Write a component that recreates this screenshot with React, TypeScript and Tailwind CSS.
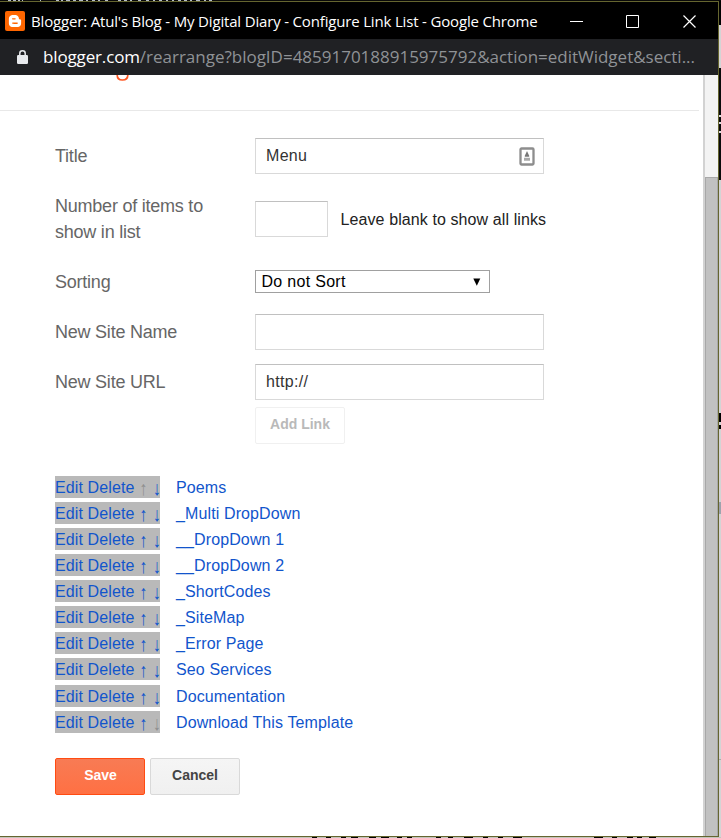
import { FaBloggerB } from "react-icons/fa";
import type { ReactNode } from "react";

const LINKS = [
  "Poems",
  "_Multi DropDown",
  "__DropDown 1",
  "__DropDown 2",
  "_ShortCodes",
  "_SiteMap",
  "_Error Page",
  "Seo Services",
  "Documentation",
  "Download This Template",
];

// [start, width] of the heading tops that peek out under the window
const HEADING_TOPS = [
  [312, 5], [326, 5], [341, 5], [351, 7], [369, 7], [381, 8], [397, 5], [407, 5], [436, 5], [448, 5],
  [464, 9], [483, 5], [498, 5], [513, 9], [594, 9], [612, 5], [627, 6], [637, 5], [649, 7],
];

// [start, width] of the page text that peeks out above the window
const TEXT_BOTTOMS = [
  [8, 3], [13, 3], [18, 2], [22, 1], [40, 1], [56, 3], [61, 2], [66, 4], [73, 3], [79, 4], [86, 2],
  [92, 3], [98, 2], [105, 3], [118, 3], [124, 3], [130, 2], [138, 3], [146, 3], [153, 2], [159, 3],
  [166, 2], [172, 2], [178, 3], [184, 3], [190, 2], [196, 4], [204, 2], [209, 3],
];

function TitleBar() {
  return (
    <div className="flex h-[37px] shrink-0 items-center bg-black pl-[5px] text-white">
      <span className="flex size-5 shrink-0 items-center justify-center rounded-[2px] bg-[#ff6600]">
        <FaBloggerB className="size-[14px]" />
      </span>
      <span className="ml-[6px] w-[520px] shrink-0 whitespace-nowrap font-['Open_Sans','Noto_Sans',sans-serif] text-[15px] leading-5 tracking-[-0.17px]">
        Blogger: Atul&#39;s Blog - My Digital Diary - Configure Link List - Google Chrome
      </span>
      <svg className="ml-[19px] shrink-0" width="128" height="14" viewBox="0 0 128 14" fill="none" stroke="white">
        <path d="M0 7.5h13" />
        <path d="M56.5 1.5h12v12h-12z" />
        <path d="M113.5 1.5l12 12M125.5 1.5l-12 12" strokeWidth="1.2" />
      </svg>
    </div>
  );
}

function AddressBar() {
  return (
    <div className="flex h-9 shrink-0 items-center bg-[#202124] pl-[17px]">
      <svg className="shrink-0" width="11" height="14" viewBox="0 0 11 14" fill="none">
        <rect x="0" y="5" width="11" height="9" rx="1.2" fill="#e8eaed" />
        <path d="M2.8 5.5V3.3a2.7 2.5 0 0 1 5.4 0v2.2" stroke="#e8eaed" strokeWidth="1.5" />
      </svg>
      <span className="ml-[15px] whitespace-nowrap font-['Open_Sans','Noto_Sans',sans-serif] text-[17px] leading-6 tracking-[-0.01px] text-[#8f9296]">
        <span className="tracking-[-0.15px] text-white">blogger.com</span>
        /rearrange?blogID=4859170188915975792&amp;action=editWidget&amp;secti...
      </span>
    </div>
  );
}

function Row({ label, className, children }: { label: string; className: string; children: ReactNode }) {
  return (
    <div className={`flex items-center ${className}`}>
      <div className="w-[200px] shrink-0 pr-10 text-[18px] leading-[26px] tracking-[-0.23px] text-[#666]">{label}</div>
      {children}
    </div>
  );
}

function Field({ className, children }: { className: string; children?: ReactNode }) {
  return (
    <div
      className={`flex h-9 shrink-0 items-center border border-[#d9d9d9] border-t-[#c0c0c0] bg-white pl-[10px] text-[16px] tracking-[0.3px] text-[#333] ${className}`}
    >
      {children}
    </div>
  );
}

function ContactIcon() {
  return (
    <svg className="ml-auto mr-[8px]" width="16" height="19" viewBox="0 0 16 19" fill="none">
      <rect x="1.5" y="1.5" width="13" height="16" rx="1" stroke="#8d8d8d" strokeWidth="2.3" />
      <path d="M8 4l2.2 4.8v1H5.8v-1z" fill="#777" />
      <path d="M5 11.5h6M5 13h6" stroke="#aaa" strokeWidth="1.3" />
    </svg>
  );
}

function Arrow({ children, disabled }: { children: string; disabled: boolean }) {
  return (
    <span className={`inline-block w-[9px] translate-y-px scale-y-125 ${disabled ? "text-[#8f8f8f]" : ""}`}>
      {children}
    </span>
  );
}

function Form() {
  return (
    <div className="flex flex-col pl-[55px] pt-[27px]">
      <Row label="Title" className="h-9">
        <Field className="w-[289px]">
          Menu
          <ContactIcon />
        </Field>
      </Row>
      <Row label="Number of items to show in list" className="mt-[19px] h-[52px]">
        <Field className="w-[73px]" />
        <span className="ml-[12.5px] whitespace-nowrap pt-[2px] text-[16px] tracking-[0.1px] text-[#222]">
          Leave blank to show all links
        </span>
      </Row>
      <Row label="Sorting" className="mt-[25px] h-[23px]">
        <div className="flex h-[23px] w-[235px] items-center justify-between border border-[#a0a0a0] pl-[5.5px] pr-[8px] text-[16px] tracking-[0.3px] text-black">
          Do not Sort
          <svg width="8" height="8" viewBox="0 0 8 8">
            <path d="M0.3 0.5h7L3.8 7.8z" fill="black" />
          </svg>
        </div>
      </Row>
      <Row label="New Site Name" className="mt-[21px] h-9">
        <Field className="w-[289px]" />
      </Row>
      <Row label="New Site URL" className="mt-[14px] h-9">
        <Field className="w-[289px]">http://</Field>
      </Row>
      <div className="ml-[200px] mt-[7px] flex h-[37px] w-[90px] items-center justify-center rounded-[2px] border border-[#f0f0f0] pb-[2px] text-[14px] font-bold text-[#b9b9b9]">
        Add Link
      </div>
      <div className="mt-[32px] flex flex-col gap-[4.065px] whitespace-nowrap text-[16px] leading-[24px] tracking-[0.12px] text-[#1155cc]">
        {LINKS.map((name, i) => (
          <div key={name} className="flex h-[22px]">
            <div className="w-[105px] shrink-0 bg-[#b9b9b9]">
              Edit Delete <Arrow disabled={i === 0}>↑</Arrow>{" "}
              <Arrow disabled={i === LINKS.length - 1}>↓</Arrow>
            </div>
            <span className="ml-[16px]">{name}</span>
          </div>
        ))}
      </div>
      <div className="mt-[25.4px] flex gap-[5px] text-[14px] font-bold">
        <div className="flex h-[37px] w-[90px] items-center justify-center rounded-[2px] border border-[#ff4b12] bg-linear-to-b from-[#f87b54] to-[#ff7043] pb-[2px] pl-px text-white">
          Save
        </div>
        <div className="flex h-[37px] w-[90px] items-center justify-center rounded-[2px] border border-[#d9d9d9] bg-linear-to-b from-[#f5f5f5] to-[#f0f0f0] pb-[2px] text-[#444]">
          Cancel
        </div>
      </div>
    </div>
  );
}

function PageBehind() {
  return (
    <svg className="shrink-0" width="2" height="836" viewBox="0 0 2 836" shapeRendering="crispEdges">
      <rect width="2" height="836" fill="#d4d4d4" />
      <rect width="2" height="24" fill="#000" />
      <rect y="67" width="2" height="112" fill="#0a0a0a" />
      <path d="M0 114.5h2M0 121.5h2M0 130.5h2" stroke="#ddd" strokeWidth="2" />
      <rect y="412" width="2" height="9" fill="#000" />
      <rect y="424" width="2" height="4" fill="#000" />
      <rect y="501" width="2" height="12" fill="#9da3ad" />
      <rect y="758" width="2" height="1" fill="#aaa" />
    </svg>
  );
}

export default function App() {
  return (
    <div className="flex h-[838px] w-[721px] flex-col overflow-hidden bg-white font-['Liberation_Sans',Arial,sans-serif]">
      <svg className="shrink-0" width="721" height="1" viewBox="0 0 721 1" shapeRendering="crispEdges">
        <rect width="721" height="1" fill="#080808" />
        {TEXT_BOTTOMS.map(([x, w]) => (
          <rect key={x} x={x} width={w} height="1" fill="#b5bdc8" />
        ))}
      </svg>
      <div className="flex h-[836px] shrink-0">
        <div className="flex w-[719px] shrink-0 flex-col border-y border-r border-[#65652f]">
          <TitleBar />
          <AddressBar />
          <div className="flex min-h-0 flex-1">
            <div className="w-[703px] shrink-0">
              <div className="mr-[4px] h-9 border-b border-[#e8e8e8] pl-[115px]">
                <svg width="15" height="7" viewBox="0 0 15 7" fill="none" className="block">
                  <path d="M2.2 0c0 3.6 2 5 5.2 5s5.4-1.6 5.4-5" stroke="#ff5722" strokeWidth="1.7" />
                </svg>
              </div>
              <Form />
            </div>
            <div className="w-[15px] shrink-0 border-l-2 border-[#d2d2d2] bg-[#f3f3f3] pt-[102px]">
              <div className="h-full border border-b-0 border-[#a8a8a8] bg-[#c1c1c1]" />
            </div>
          </div>
        </div>
        <PageBehind />
      </div>
      <svg className="shrink-0" width="721" height="1" viewBox="0 0 721 1" shapeRendering="crispEdges">
        <rect width="721" height="1" fill="#c4c4bc" />
        {HEADING_TOPS.map(([x, w]) => (
          <rect key={x} x={x} width={w} height="1" fill="#000" />
        ))}
      </svg>
    </div>
  );
}
